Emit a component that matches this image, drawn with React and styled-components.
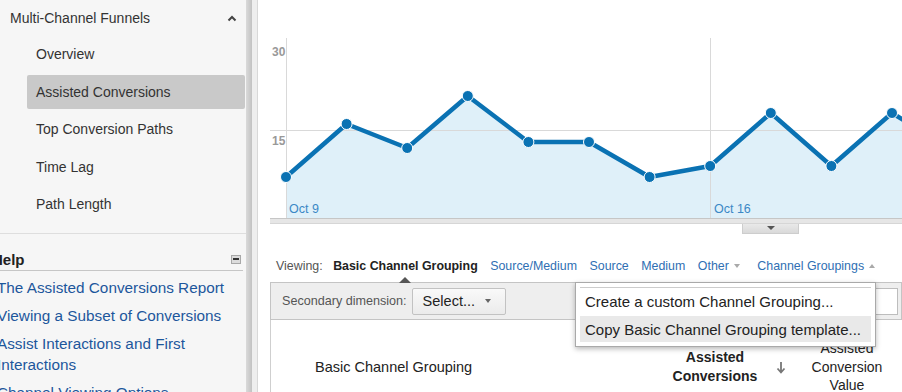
import React from "react";
import styled, { createGlobalStyle } from "styled-components";

const GlobalStyle = createGlobalStyle`
  html, body {
    margin: 0;
    padding: 0;
    background: #ffffff;
  }
  body {
    font-family: "Liberation Sans", Arial, Helvetica, sans-serif;
    color: #222;
    overflow: hidden;
  }
`;

const Page = styled.div`
  display: flex;
  width: 902px;
  height: 392px;
  overflow: hidden;
`;

/* ---------- sidebar ---------- */

const Sidebar = styled.aside`
  width: 246px;
  flex-shrink: 0;
  background: #f6f6f6;
  overflow: hidden;
`;

const NavHeader = styled.div`
  height: 36px;
  display: flex;
  align-items: center;
  justify-content: space-between;
  padding: 0 9px 0 10px;
  font-size: 14px;
  color: #333;
`;

const NavList = styled.ul`
  list-style: none;
  margin: 0;
  padding: 1px 0 12px;
  display: flex;
  flex-direction: column;
  gap: 3.5px;
  border-bottom: 1px solid #dedede;
`;

const NavItem = styled.li`
  height: 34px;
  margin-left: 27px;
  width: 218px;
  padding-left: 9px;
  box-sizing: border-box;
  display: flex;
  align-items: center;
  font-size: 14px;
  color: #333;
  border-radius: 2px;
  background: ${(p) => (p.$active ? "#c9c9c9" : "transparent")};
`;

const Help = styled.div`
  margin: 14px 0 0 -3px;
  width: 246px;
`;

const HelpHeader = styled.div`
  height: 22px;
  display: flex;
  align-items: center;
  justify-content: space-between;
  border-bottom: 1px solid #c6c6c6;
  font-size: 15px;
  font-weight: 700;
  color: #222;
  padding-right: 2px;
  & > span {
    margin-left: -5px;
  }
`;

const MinusBox = styled.i`
  width: 8px;
  height: 7px;
  background: #dcdcdc;
  border: 1px solid #a8a8a8;
  display: flex;
  align-items: center;
  justify-content: center;
  &::before {
    content: "";
    width: 6px;
    height: 2px;
    background: #333;
  }
`;

const HelpList = styled.ul`
  list-style: none;
  margin: 6px 0 0;
  padding: 0;
  display: flex;
  flex-direction: column;
  gap: 7px;
`;

const HelpLink = styled.li`
  font-size: 15.3px;
  line-height: 21px;
  color: #1d569c;
  padding-right: 10px;
`;

const Divider = styled.div`
  width: 12px;
  flex-shrink: 0;
  background: linear-gradient(
    to right,
    #dadada 0,
    #c2c2c2 6px,
    #eeeeee 6px,
    #eeeeee 11px,
    #d8d8d8 11px,
    #d8d8d8 12px
  );
`;

/* ---------- main ---------- */

const Main = styled.main`
  position: relative;
  flex: 1;
  padding-left: 12px;
`;

const ChartBox = styled.div`
  height: 218px;
  & svg {
    display: block;
  }
`;

const AxisBar = styled.div`
  height: 4px;
  background: #e6e6e6;
  border-top: 1px solid #c6c6c6;
  border-bottom: 1px solid #d6d6d6;
`;

const Handle = styled.div`
  margin-left: 472px;
  width: 57px;
  height: 10px;
  box-sizing: border-box;
  background: linear-gradient(#e9e9e9, #d9d9d9);
  border: 1px solid #cdcdcd;
  border-top: none;
  display: flex;
  justify-content: center;
  padding-top: 2px;
  &::before {
    content: "";
    border-left: 4px solid transparent;
    border-right: 4px solid transparent;
    border-top: 4px solid #555;
    height: 0;
  }
`;

const ViewingRow = styled.div`
  margin-top: 22px;
  height: 20px;
  padding-left: 6px;
  display: flex;
  align-items: center;
  gap: 12.5px;
  font-size: 12.4px;
  white-space: nowrap;
`;

const ViewLabel = styled.span`
  color: #555;
  margin-right: -2px;
`;

const ViewTab = styled.span`
  position: relative;
  color: ${(p) => (p.$active ? "#222" : "#2f6fb3")};
  font-weight: ${(p) => (p.$active ? 700 : 400)};
  margin-left: ${(p) => p.$push || 0}px;
  display: inline-flex;
  align-items: center;
  ${(p) =>
    p.$active &&
    `
    &::after {
      content: "";
      position: absolute;
      left: 50%;
      bottom: -10px;
      transform: translateX(-50%);
      border-left: 6px solid transparent;
      border-right: 6px solid transparent;
      border-bottom: 6px solid #555;
    }
  `}
`;

const Caret = styled.i`
  margin-left: 5px;
  border-left: 3.5px solid transparent;
  border-right: 3.5px solid transparent;
  ${(p) => (p.$up ? "border-bottom" : "border-top")}: 4px solid #a9a9a9;
`;

const Toolbar = styled.div`
  margin-top: 6px;
  height: 38px;
  box-sizing: border-box;
  border: 1px solid #c4c4c4;
  background: #eeeeee;
  padding: 0 3px 0 11px;
  display: flex;
  align-items: center;
`;

const ToolbarLabel = styled.span`
  font-size: 12.6px;
  color: #555;
`;

const SelectButton = styled.button`
  margin-left: 5px;
  width: 94px;
  height: 27px;
  box-sizing: border-box;
  border: 1px solid #c2c2c2;
  border-radius: 2px;
  background: linear-gradient(#f9f9f9, #ebebeb);
  font-family: inherit;
  font-size: 14.5px;
  color: #222;
  padding: 0 0 0 10px;
  display: flex;
  align-items: center;
  gap: 10px;
  &::after {
    content: "";
    border-left: 3.5px solid transparent;
    border-right: 3.5px solid transparent;
    border-top: 4px solid #666;
  }
`;

const SearchBox = styled.div`
  margin-left: auto;
  width: 180px;
  height: 27px;
  box-sizing: border-box;
  background: #fff;
  border: 1px solid #bdbdbd;
`;

const Table = styled.div`
  border-left: 1px solid #cfcfcf;
  height: 80px;
`;

const HeaderRow = styled.div`
  height: 94px;
  display: grid;
  grid-template-columns: 389px 110px 22px 110px;
  align-items: center;
`;

const HeadCell = styled.div`
  font-size: 14px;
  font-weight: ${(p) => (p.$bold ? 700 : 400)};
  line-height: ${(p) => (p.$bold ? "19px" : "18.5px")};
  text-align: ${(p) => (p.$left ? "left" : "center")};
  padding-left: ${(p) => (p.$left ? "44px" : "0")};
  color: #222;
  display: flex;
  justify-content: ${(p) => (p.$left ? "flex-start" : "center")};
`;

const FirstCell = styled(HeadCell)`
  font-size: 14.5px;
`;

const Dropdown = styled.div`
  position: absolute;
  left: 317px;
  top: 282px;
  width: 301px;
  box-sizing: border-box;
  background: #fff;
  border: 1px solid #a9a9a9;
  box-shadow: 0 2px 5px rgba(0, 0, 0, 0.28);
  padding: 4px;
`;

const MenuList = styled.div`
  border-top: 1px solid #cccccc;
  display: flex;
  flex-direction: column;
  gap: 2px;
`;

const MenuItem = styled.div`
  height: 26px;
  display: flex;
  align-items: center;
  padding-left: 5px;
  font-size: 15px;
  color: #222;
  white-space: nowrap;
  background: ${(p) => (p.$hover ? "#e9e9e9" : "transparent")};
`;

/* ---------- chart data ---------- */

const values = [177, 124, 148, 96, 142, 142, 177, 166, 113, 166, 113, 150];
const points = values.map((y, i) => [16 + i * 60.6, y]);
const linePath = points.map(([x, y], i) => `${i ? "L" : "M"}${x} ${y}`).join(" ");
const areaPath = `${linePath} L${points[points.length - 1][0]} 218 L16 218 Z`;

function Chart() {
  return (
    <ChartBox>
      <svg width="632" height="218" viewBox="0 0 632 218">
        <path d={areaPath} fill="#dff0f9" />
        <line x1="0" y1="130.5" x2="632" y2="130.5" stroke="#d9d9d9" />
        <line x1="16.5" y1="38" x2="16.5" y2="218" stroke="#d9d9d9" />
        <line x1="440.5" y1="38" x2="440.5" y2="218" stroke="#d9d9d9" />
        <text x="2" y="56" fontSize="12" fontWeight="700" fill="#999" fontFamily="Liberation Sans, Arial, sans-serif">30</text>
        <text x="2" y="145" fontSize="12" fontWeight="700" fill="#999" fontFamily="Liberation Sans, Arial, sans-serif">15</text>
        <path d={linePath} fill="none" stroke="#0a72b3" strokeWidth="4.5" strokeLinejoin="round" />
        {points.map(([x, y], i) => (
          <circle key={i} cx={x} cy={y} r="5.5" fill="#0a72b3" stroke="#ffffff" strokeWidth="1" />
        ))}
        <text x="19" y="213" fontSize="12.5" fill="#3b88c6" fontFamily="Liberation Sans, Arial, sans-serif">Oct 9</text>
        <text x="444" y="213" fontSize="12.5" fill="#3b88c6" fontFamily="Liberation Sans, Arial, sans-serif">Oct 16</text>
      </svg>
    </ChartBox>
  );
}

function App() {
  return (
    <>
      <GlobalStyle />
      <Page>
        <Sidebar>
          <NavHeader>
            <span>Multi-Channel Funnels</span>
            <svg width="10" height="7" viewBox="0 0 10 7">
              <path d="M1.5 5.5 L5 2 L8.5 5.5" fill="none" stroke="#444" strokeWidth="2" />
            </svg>
          </NavHeader>
          <NavList>
            <NavItem>Overview</NavItem>
            <NavItem $active>Assisted Conversions</NavItem>
            <NavItem>Top Conversion Paths</NavItem>
            <NavItem>Time Lag</NavItem>
            <NavItem>Path Length</NavItem>
          </NavList>
          <Help>
            <HelpHeader>
              <span>Help</span>
              <MinusBox />
            </HelpHeader>
            <HelpList>
              <HelpLink>The Assisted Conversions Report</HelpLink>
              <HelpLink>Viewing a Subset of Conversions</HelpLink>
              <HelpLink>Assist Interactions and First Interactions</HelpLink>
              <HelpLink>Channel Viewing Options</HelpLink>
            </HelpList>
          </Help>
        </Sidebar>
        <Divider />
        <Main>
          <Chart />
          <AxisBar />
          <Handle />
          <ViewingRow>
            <ViewLabel>Viewing:</ViewLabel>
            <ViewTab $active>Basic Channel Grouping</ViewTab>
            <ViewTab>Source/Medium</ViewTab>
            <ViewTab>Source</ViewTab>
            <ViewTab>Medium</ViewTab>
            <ViewTab>
              Other<Caret />
            </ViewTab>
            <ViewTab $push={5}>
              Channel Groupings<Caret $up />
            </ViewTab>
          </ViewingRow>
          <Toolbar>
            <ToolbarLabel>Secondary dimension:</ToolbarLabel>
            <SelectButton>Select...</SelectButton>
            <SearchBox />
          </Toolbar>
          <Table>
            <HeaderRow>
              <FirstCell $left>Basic Channel Grouping</FirstCell>
              <HeadCell $bold>
                Assisted
                <br />
                Conversions
              </HeadCell>
              <HeadCell>
                <svg width="10" height="13" viewBox="0 0 10 13">
                  <path d="M5 1 V11 M1.5 7.5 L5 11.5 L8.5 7.5" fill="none" stroke="#777" strokeWidth="1.8" />
                </svg>
              </HeadCell>
              <HeadCell>
                Assisted
                <br />
                Conversion
                <br />
                Value
              </HeadCell>
            </HeaderRow>
          </Table>
          <Dropdown>
            <MenuList>
              <MenuItem>Create a custom Channel Grouping...</MenuItem>
              <MenuItem $hover>Copy Basic Channel Grouping template...</MenuItem>
            </MenuList>
          </Dropdown>
        </Main>
      </Page>
    </>
  );
}

export default App;
